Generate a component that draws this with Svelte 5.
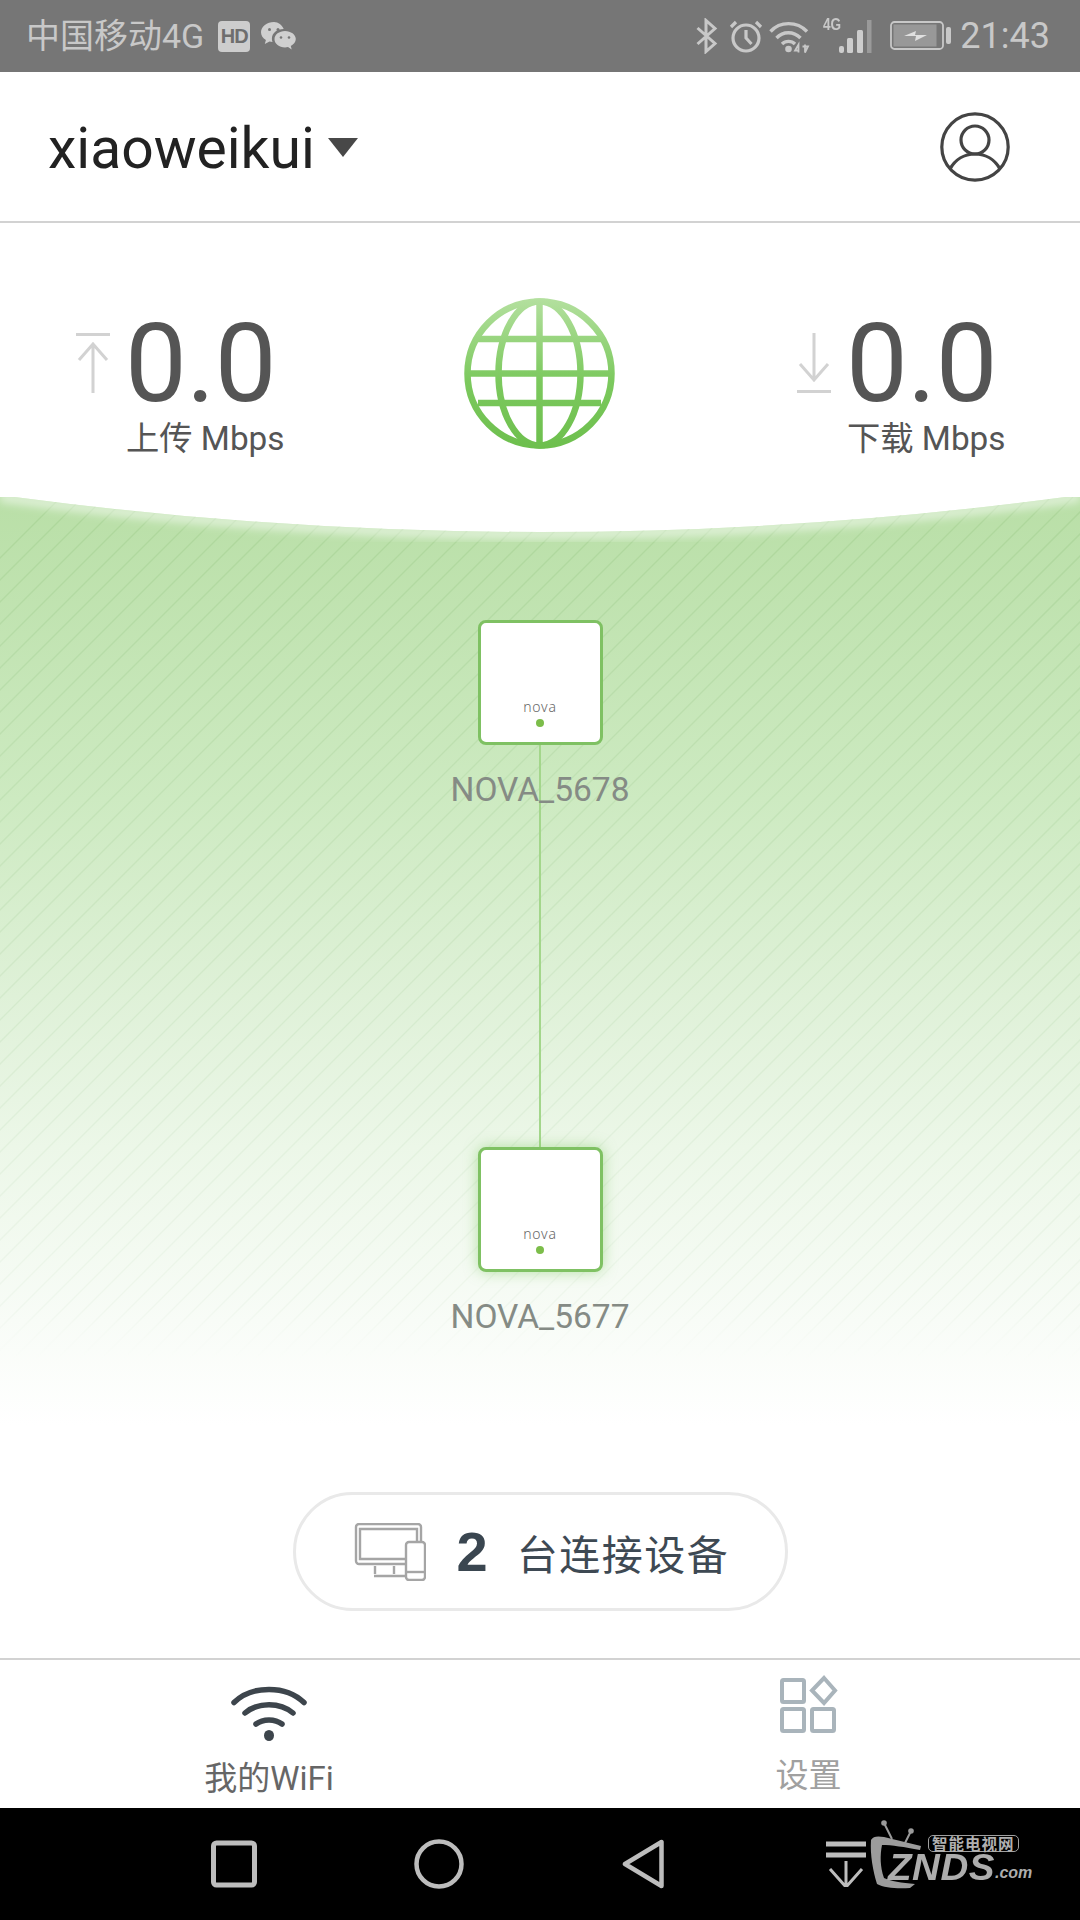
<script>
  const stripes = Array.from({ length: 150 }, (_, i) => i * 22 - 1100);
</script>

<div class="app">
  <div class="status">
    <div class="status-left">
      <span class="carrier">中国移动4G</span>
      <span class="hd">HD</span>
      <svg class="wechat" width="35" height="29" viewBox="0 0 35 29">
        <path d="M13 0C6 0 0 4.6 0 10.2c0 3.2 1.9 5.900 4.900 7.800L3.800 22l4.700-2.500c1 .3 2 .4 3 .5-.5-1.200-.6-2.400-.6-3.300 0-5.500 5-9.700 11.800-9.700C21 3 17.400 0 13 0z" fill="#cfcfcf"/>
        <path d="M24 9c-5.800 0-10.500 3.600-10.500 8.200S18.200 25.400 24 25.400c1 0 2-.1 3-.4l3.700 2.500-.9-3.500c3-1.600 5-4 5-6.900C34.800 12.600 29.800 9 24 9z" fill="#cfcfcf"/>
        <circle cx="8.500" cy="7.500" r="1.500" fill="#767676"/><circle cx="17" cy="7.500" r="1.500" fill="#767676"/>
        <circle cx="20" cy="15.500" r="1.300" fill="#767676"/><circle cx="28" cy="15.500" r="1.300" fill="#767676"/>
      </svg>
    </div>
    <div class="status-right">
      <svg width="22" height="36" viewBox="0 0 22 36" fill="none" stroke="#c8c8c8" stroke-width="3">
        <path d="M1.500 10 19 25.500 10 33.500V2.500l9 8L1.500 26"/>
      </svg>
      <svg class="alarm" width="34" height="34" viewBox="0 0 34 34" fill="none" stroke="#c8c8c8" stroke-width="3.200">
        <circle cx="17" cy="19" r="13"/><path d="M17 11v8l5.500 6M2 8l5-5M32 8l-5-5"/>
      </svg>
      <svg class="wifi" width="41" height="33" viewBox="0 0 41 33" fill="none" stroke="#c8c8c8" stroke-width="3.400">
        <path d="M1.500 11.500C11 1 28 1 38 11.500M7.500 18c6.500-7 17-7 24 0M13 24c3.500-3.500 9.500-3.500 13 0"/>
        <circle cx="19.500" cy="29" r="3.300" fill="#c8c8c8" stroke="none"/>
        <path d="M29.500 32.500v-8l-3.500 6h4M36 24.500v8l3-6h-5.500" stroke-width="1.800"/>
      </svg>
      <div class="signal">
        <span class="net">4G</span>
        <svg width="34" height="34" viewBox="0 0 34 34" fill="#cdcdcd">
          <rect x="0" y="27" width="5" height="7" rx="2"/><rect x="8" y="19" width="6" height="15" rx="1.500"/>
          <rect x="18" y="11" width="6" height="23" rx="1.500"/><rect x="28" y="1" width="4.500" height="33" fill="#9a9a9a"/>
        </svg>
      </div>
      <svg class="battery" width="62" height="30" viewBox="0 0 62 30">
        <rect x="1" y="1" width="52" height="27" rx="3.500" fill="none" stroke="#c8c8c8" stroke-width="1.800"/>
        <rect x="3.500" y="3.500" width="43" height="22" fill="#989898"/>
        <rect x="56" y="6" width="5" height="17" rx="2" fill="#c8c8c8"/>
        <path d="M14 15l12-5-1 4 12 0-12 6 1-5z" fill="#e0e0e0"/>
      </svg>
      <span class="time">21:43</span>
    </div>
  </div>

  <header class="header">
    <div class="account">
      <span class="name">xiaoweikui</span>
      <svg width="30" height="19" viewBox="0 0 30 19"><path d="M0 0h30L15 19z" fill="#484848"/></svg>
    </div>
    <svg class="user" width="70" height="70" viewBox="0 0 70 70" fill="none" stroke="#444" stroke-width="3.200">
      <circle cx="35" cy="35" r="33.200"/>
      <circle cx="35" cy="28" r="14"/>
      <path d="M10 57c5-9 14-15 25-15s20 6 25 15"/>
    </svg>
  </header>

  <section class="stats">
    <div class="stat up">
      <svg width="34" height="62" viewBox="0 0 34 62" fill="none" stroke="#d2d2d2" stroke-width="3">
        <path d="M0 1.500h34M17 60V11M3 27 17 11l14 16"/>
      </svg>
      <div class="stat-text">
        <div class="value">0.0</div>
        <div class="unit">上传 Mbps</div>
      </div>
    </div>
    <svg class="globe" width="151" height="151" viewBox="0 0 151 151" fill="none" stroke="url(#globeGrad)" stroke-width="6.500">
      <defs>
        <linearGradient id="globeGrad" gradientUnits="userSpaceOnUse" x1="75" y1="0" x2="75" y2="151">
          <stop offset="0" stop-color="#b4e09f"/><stop offset=".55" stop-color="#7cc95e"/><stop offset="1" stop-color="#6dbf4d"/>
        </linearGradient>
      </defs>
      <circle cx="75.500" cy="75.500" r="72"/>
      <ellipse cx="75.500" cy="75.500" rx="41" ry="72"/>
      <path d="M75.500 3v145M14 41h123M3 75.500h145M14 105h123"/>
    </svg>
    <div class="stat down">
      <svg width="34" height="60" viewBox="0 0 34 60" fill="none" stroke="#d2d2d2" stroke-width="3">
        <path d="M0 58.500h34M17 0v47M3 31l14 16 14-16"/>
      </svg>
      <div class="stat-text">
        <div class="value">0.0</div>
        <div class="unit">下载 Mbps</div>
      </div>
    </div>
  </section>

  <main class="panel">
    <svg class="wave" width="1080" height="1161" viewBox="0 0 1080 1161">
      <defs>
        <linearGradient id="waveGrad" x1="0" y1="0" x2="0" y2="1">
          <stop offset="0" stop-color="#b9dfa7"/>
          <stop offset=".26" stop-color="#cdeac1"/>
          <stop offset=".43" stop-color="#dff1d8"/>
          <stop offset=".56" stop-color="#ecf7e8"/>
          <stop offset=".71" stop-color="#f8fcf7"/>
          <stop offset=".8" stop-color="#ffffff"/>
        </linearGradient>
        <linearGradient id="stripeFade" gradientUnits="userSpaceOnUse" x1="0" y1="0" x2="0" y2="1161">
          <stop offset="0" stop-color="#8cbf78" stop-opacity=".3"/>
          <stop offset=".45" stop-color="#a9cfa0" stop-opacity=".22"/>
          <stop offset=".7" stop-color="#d0e2cc" stop-opacity=".2"/>
          <stop offset=".76" stop-color="#ffffff" stop-opacity="0"/>
        </linearGradient>
        <clipPath id="waveClip"><path d="M0 -2Q540 72 1080 -2V1161H0Z"/></clipPath>
        <filter id="soft" x="-5%" y="-20%" width="110%" height="140%"><feGaussianBlur stdDeviation="4"/></filter>
      </defs>
      <g clip-path="url(#waveClip)">
        <rect width="1080" height="1161" fill="url(#waveGrad)"/>
        <path stroke="url(#stripeFade)" stroke-width="1.300" fill="none"
          d={stripes.map((s) => `M${s} 1161L${s + 1161} 0`).join('')}/>
        <path d="M0 0Q540 74 1080 0" fill="none" stroke="#fff" stroke-opacity=".55" stroke-width="10" filter="url(#soft)"/>
      </g>
    </svg>

    <div class="topology">
      <div class="node">
        <div class="box"><span class="nova">nova</span><i class="dot"></i></div>
        <span class="node-name">NOVA_5678</span>
      </div>
      <div class="link"></div>
      <div class="node second">
        <div class="box"><span class="nova">nova</span><i class="dot"></i></div>
        <span class="node-name">NOVA_5677</span>
      </div>
    </div>

    <div class="pill">
      <svg class="devices" width="72" height="58" viewBox="0 0 72 58" fill="none" stroke="#a5a5a5" stroke-width="2.400">
        <path d="M51 41H5a3 3 0 0 1-3-3V4a3 3 0 0 1 3-3h59a3 3 0 0 1 3 3v14"/>
        <path d="M51 36H6V6h57v12"/>
        <path d="M21 43v8M40 43v8M20 53h31" />
        <rect x="52" y="19" width="19" height="38" rx="3" fill="#fff"/>
        <path d="M52 49h19"/>
      </svg>
      <span class="count">2</span>
      <span class="count-label">台连接设备</span>
    </div>
  </main>

  <nav class="tabs">
    <div class="tab active">
      <svg width="76" height="56" viewBox="0 0 76 56" fill="none" stroke="#3d454c" stroke-linecap="round" stroke-width="5.500">
        <path d="M3 16.500C21 -1 55 -1 73 16.500M14 27c13-11 35-11 48 0M25 38c7-5.500 19-5.500 26 0"/>
        <ellipse cx="38" cy="49.500" rx="5" ry="5.500" fill="#3d454c" stroke="none"/>
      </svg>
      <span>我的WiFi</span>
    </div>
    <div class="tab">
      <svg width="58" height="58" viewBox="0 0 58 58" fill="none" stroke="#a9b4bb" stroke-width="4">
        <rect x="2" y="5" width="22" height="22" rx="1.500"/>
        <path d="M44 3 55 15.500 44 28 32 15.500Z"/>
        <rect x="2" y="34" width="22" height="22" rx="1.500"/>
        <rect x="32" y="34" width="22" height="22" rx="1.500"/>
      </svg>
      <span>设置</span>
    </div>
  </nav>

  <footer class="nav">
    <svg class="nav-icon square" width="46" height="48" viewBox="0 0 46 48"><rect x="2.500" y="3" width="41" height="42" rx="3" fill="none" stroke="#bdbdbd" stroke-width="5"/></svg>
    <svg class="nav-icon circle" width="50" height="50" viewBox="0 0 50 50"><circle cx="25" cy="25" r="22.500" fill="none" stroke="#bdbdbd" stroke-width="4.500"/></svg>
    <svg class="nav-icon back" width="42" height="50" viewBox="0 0 42 50"><path d="M39.500 3V47L3 25Z" fill="none" stroke="#bdbdbd" stroke-width="4.500" stroke-linejoin="round"/></svg>
    <svg class="nav-icon drop" width="40" height="46" viewBox="0 0 40 46" fill="none" stroke="#bdbdbd">
      <path d="M0 3h40M0 14h40" stroke-width="5"/>
      <path d="M20 46V20M4 28l16 18 16-18" stroke-width="3"/>
    </svg>
    <div class="logo">
      <svg class="tv" width="80" height="75" viewBox="0 0 80 75">
        <path d="M24 8 32 24M51 16 45 28" fill="none" stroke="#9a9a9a" stroke-width="2"/>
        <circle cx="24" cy="8" r="2.800" fill="#9a9a9a"/><circle cx="51" cy="16" r="2.800" fill="#9a9a9a"/>
        <path d="M11 25C13 21 18 21 24 22L61 31 60 35C44 32 32 30 22 30 20 40 20 52 24 63 30 66 42 68 55 69L50 73C38 74 24 73 17 69 13 56 10 40 11 25Z" fill="#9c9c9c"/>
      </svg>
      <span class="badge">智能电视网</span>
      <span class="znds">ZNDS</span>
      <span class="com">.com</span>
    </div>
  </footer>
</div>

<style>
  :global(body) { margin: 0; background: #fff; }
  .app {
    width: 1080px; height: 1920px; display: flex; flex-direction: column; overflow: hidden;
    font-family: Roboto, "Noto Sans CJK SC", sans-serif; background: #fff;
  }
  .status {
    height: 72px; flex: none; background: #767676; color: #c8c8c8;
    display: flex; justify-content: space-between; align-items: center; padding: 0 30px 0 26px; box-sizing: border-box;
  }
  .status-left, .status-right { display: flex; align-items: center; }
  .carrier { font-size: 34px; line-height: 72px; letter-spacing: 0; }
  .hd {
    width: 32px; height: 31px; margin-left: 14px; background: #cdcdcd; color: #6e6e6e; border-radius: 4px;
    font: 700 20px/31px "Liberation Sans", sans-serif; text-align: center; letter-spacing: -1px;
  }
  .wechat { margin-left: 11px; }
  .status-right svg { flex: none; }
  .alarm { margin-left: 11px; }
  .wifi { margin-left: 6px; }
  .signal { margin-left: 13px; display: flex; align-items: flex-end; position: relative; padding-left: 16px; height: 34px; }
  .net { position: absolute; left: 0; top: -3px; font: 700 17px/17px "Liberation Sans", sans-serif; transform: scaleX(.8); transform-origin: left; }
  .battery { margin-left: 17px; }
  .time { font-size: 36px; margin-left: 8px; line-height: 72px; }

  .header {
    height: 151px; flex: none; box-sizing: border-box; border-bottom: 2px solid #d2d2d2;
    display: flex; justify-content: space-between; align-items: center; padding: 2px 70px 0 48px;
  }
  .account { display: flex; align-items: center; gap: 13px; }
  .name { font-size: 57px; color: #222; line-height: 60px; margin-top: 2px; }
  .account svg { margin-bottom: 1px; }
  .user { margin-bottom: 2px; }

  .stats {
    height: 274px; flex: none; display: grid; grid-template-columns: 388px 151px 1fr; padding: 75px 0 0 76px; box-sizing: border-box; align-items: start;
  }
  .stat { display: flex; align-items: flex-start; }
  .stat svg { margin-top: 35px; flex: none; }
  .stat.down { margin-left: 182px; }
  .stat-text { margin-left: 15px; display: flex; flex-direction: column; }
  .value { font-size: 110px; line-height: 110px; color: #555; margin-top: 11px; letter-spacing: -.5px; }
  .unit { font-size: 33.300px; line-height: 40px; color: #555; margin-left: 1px; white-space: nowrap; }
  .globe { display: block; }

  .panel { flex: 1; position: relative; display: flex; flex-direction: column; align-items: center; }
  .wave { position: absolute; left: 0; top: 0; display: block; }
  .topology { position: relative; margin-top: 123px; display: flex; flex-direction: column; align-items: center; }
  .node { position: relative; width: 125px; height: 125px; }
  .box {
    width: 100%; height: 100%; box-sizing: border-box; background: #fff; border: 3px solid #7fc163; border-radius: 8px;
    display: flex; flex-direction: column; align-items: center; justify-content: flex-end; padding-bottom: 15px;
  }
  .second .box { box-shadow: 0 0 14px rgba(120, 200, 90, .5); }
  .nova { font: 300 14px/14px "Noto Sans", sans-serif; color: #666; letter-spacing: .8px; }
  .dot { width: 8px; height: 8px; border-radius: 50%; background: #7cbd4a; margin-top: 5px; }
  .node-name {
    position: absolute; left: 50%; top: 100%; transform: translateX(-50%); margin-top: 25px;
    font-size: 33.500px; line-height: 40px; color: #858b85; white-space: nowrap;
  }
  .link { width: 2px; height: 402px; background: #a3d68b; }

  .pill {
    position: relative; margin-top: 220px; width: 495px; height: 119px; box-sizing: border-box;
    border: 3px solid #e9e9e9; border-radius: 60px; background: #fff; display: flex; align-items: center; padding-left: 58px;
  }
  .devices { flex: none; }
  .count { font: 700 56px/1 "Liberation Sans", sans-serif; color: #3a4650; margin-left: 31px; }
  .count-label { font-size: 41px; color: #3e4953; margin-left: 29px; letter-spacing: 1.500px; }

  .tabs {
    height: 150px; flex: none; box-sizing: border-box; border-top: 2px solid #d2d2d2; display: grid; grid-template-columns: 1fr 1fr; background: #fff;
  }
  .tab { display: flex; flex-direction: column; align-items: center; color: #a0a0a0; font-size: 33px; line-height: 40px; padding: 15px 3px 0 0; }
  .tab svg { display: block; margin-bottom: 23px; }
  .tab.active { color: #666; padding: 26px 2px 0 0; }
  .tab.active svg { margin-bottom: 17px; }

  .nav { height: 112px; flex: none; background: #000; display: flex; align-items: center; }
  .nav-icon { flex: none; }
  .square { margin-left: 211px; }
  .circle { margin-left: 157px; }
  .back { margin-left: 158px; }
  .drop { margin-left: 162px; }
  .logo { position: relative; flex: none; width: 190px; height: 75px; margin-left: -6px; align-self: flex-start; margin-top: 7px; }
  .tv { position: absolute; left: 0; top: 0; }
  .badge {
    position: absolute; left: 68px; top: 20px; box-sizing: border-box; padding: 0 3px; border: 1.500px solid #a0a0a0; border-radius: 5px;
    font: 700 15.500px/15px "Noto Sans CJK SC", sans-serif; color: #b0b0b0; white-space: nowrap; letter-spacing: 1px;
  }
  .znds {
    position: absolute; left: 28px; top: 40px; font: italic 700 36px/26px "Liberation Sans", sans-serif; color: #adadad; letter-spacing: .5px; white-space: nowrap;
    transform: scaleX(1.07); transform-origin: left;
  }
  .com { position: absolute; left: 135px; top: 50px; font: italic 700 16px/16px "Liberation Sans", sans-serif; color: #adadad; }
</style>
